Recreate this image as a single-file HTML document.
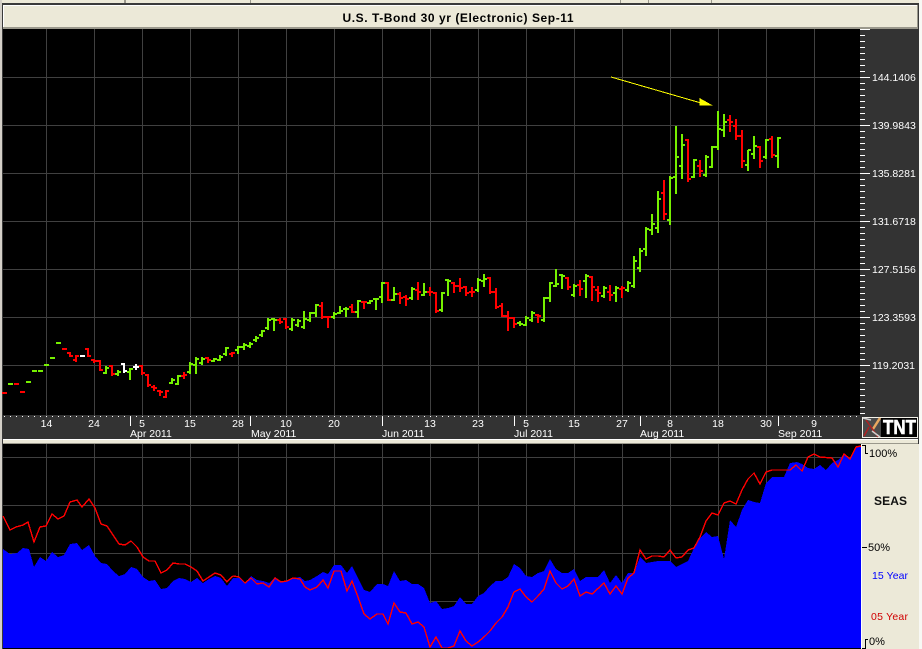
<!DOCTYPE html>
<html lang="en">
<head>
<meta charset="utf-8">
<title>U.S. T-Bond 30 yr (Electronic) Sep-11</title>
<style>
html,body{margin:0;padding:0;background:#ece9d8;width:922px;height:649px;overflow:hidden}
svg{display:block}
text{font-family:"Liberation Sans",Arial,sans-serif}
.c{shape-rendering:crispEdges}
</style>
</head>
<body>
<svg width="922" height="649" viewBox="0 0 922 649" xmlns="http://www.w3.org/2000/svg">
<defs>
<pattern id="gv" x="46" y="0" width="48" height="10" patternUnits="userSpaceOnUse"><rect class="c" width="1" height="10" fill="#404040"/></pattern>
<pattern id="gh" x="0" y="77" width="10" height="48" patternUnits="userSpaceOnUse"><rect class="c" width="10" height="1" fill="#404040"/></pattern>
<pattern id="gl" x="0" y="457" width="10" height="48" patternUnits="userSpaceOnUse"><rect class="c" width="10" height="1" fill="#404040"/></pattern>
</defs>

<rect class="c" width="922" height="649" fill="#ece9d8"/>
<rect class="c" x="919" y="0" width="3" height="649" fill="#f8f8f4"/>
<rect class="c" x="0" y="0" width="2" height="649" fill="#d4d0c8"/>
<path class="c" fill="#9a988c" d="M124 0h2v3h-2zM250 0h1v3h-1zM620 0h1v3h-1zM648 0h1v3h-1zM711 0h1v3h-1z"/>
<rect class="c" x="2" y="3" width="917" height="2" fill="#3a3a3a"/>
<rect class="c" x="2" y="3" width="1" height="646" fill="#3a3a3a"/>

<rect class="c" x="3" y="5" width="915" height="22" fill="#ece9d8"/>
<rect class="c" x="3" y="5" width="915" height="1" fill="#fff"/>
<rect class="c" x="3" y="5" width="1" height="22" fill="#fff"/>
<rect class="c" x="3" y="27" width="915" height="2" fill="#9a988c"/>
<rect class="c" x="917" y="5" width="1" height="24" fill="#9a988c"/>
<rect class="c" x="918" y="5" width="1" height="24" fill="#3a3a3a"/>
<text x="458" y="22" text-anchor="middle" font-size="12" font-weight="700" fill="#000" textLength="231" lengthAdjust="spacing">U.S. T-Bond 30 yr (Electronic) Sep-11</text>

<rect class="c" x="3" y="29" width="857" height="386" fill="#000"/>
<rect class="c" x="860" y="29" width="59" height="410" fill="#333"/>
<rect class="c" x="3" y="415" width="857" height="24" fill="#333"/>
<rect class="c" x="46" y="29" width="769" height="389" fill="url(#gv)"/>
<rect class="c" x="3" y="77" width="857" height="289" fill="url(#gh)"/>

<path class="c" fill="none" stroke="#ff0000" stroke-width="2" d="M2 393H7M14 384H19M20 392H25M62 349H67
M70 352V357M70 353H67M70 356H73
M76 355V362M76 360H73M76 356H79
M88 348V357M88 349H85M88 356H91
M94 359V363M94 360H91M94 361H97
M100 360V371M100 361H97M100 370H103
M112 365V376M112 366H109M112 374H115
M142 365V375M142 366H139M142 373H145
M148 374V387M148 375H145M148 385H151
M154 385V391M154 387H151M154 388H157
M160 390V396M160 391H157M160 392H163
M166 390V398M166 397H163M166 391H169
M184 372V379M184 376H181M184 375H187
M208 357V363M208 358H205M208 360H211
M232 352V357M232 354H229M232 353H235
M280 318V324M280 320H277M280 322H283
M286 318V329M286 319H283M286 327H289
M322 302V319M322 306H319M322 317H325
M328 316V328M328 317H325M328 317H331
M352 304V313M352 307H349M352 312H355
M364 301V309M364 302H361M364 302H367
M388 282V301M388 283H385M388 300H391
M400 292V304M400 294H397M400 298H403
M406 295V306M406 297H403M406 299H409
M418 282V300M418 290H415M418 292H421
M430 287V296M430 292H427M430 292H433
M436 292V313M436 293H433M436 311H439
M454 282V293M454 283H451M454 286H457
M460 278V292M460 286H457M460 288H463
M466 286V296M466 287H463M466 293H469
M472 287V297M472 292H469M472 292H475
M490 277V294M490 278H487M490 292H493
M496 288V309M496 292H493M496 307H499
M502 303V317M502 306H499M502 316H505
M508 311V331M508 316H505M508 318H511
M514 317V328M514 318H511M514 324H517
M538 314V323M538 315H535M538 316H541
M568 277V290M568 278H565M568 287H571
M580 280V296M580 285H577M580 289H583
M592 276V301M592 277H589M592 287H595
M598 286V302M598 290H595M598 293H601
M610 285V301M610 292H607M610 295H613
M622 286V298M622 289H619M622 288H625
M664 180V220M664 193H661M664 214H667
M688 139V182M688 140H685M688 179H691
M700 160V177M700 166H697M700 171H703
M730 115V132M730 120H727M730 122H733
M736 119V140M736 126H733M736 136H739
M742 130V168M742 136H739M742 161H745
M760 146V168M760 147H757M760 161H763
M772 136V158M772 139H769M772 155H775"/>

<path class="c" fill="none" stroke="#76f000" stroke-width="2" d="M8 384H13M26 382H31M32 371H37M38 371H43M44 365H49M50 358H55M56 343H61
M106 366V374M106 373H103M106 368H109
M118 370V376M118 374H115M118 372H121
M130 368V380M130 372H127M130 369H133
M172 378V384M172 383H169M172 380H175
M178 375V385M178 384H175M178 376H181
M190 362V374M190 372H187M190 364H193
M196 357V374M196 365H193M196 359H199
M202 357V365M202 363H199M202 359H205
M214 358V362M214 361H211M214 359H217
M220 355V361M220 360H217M220 357H223
M226 347V356M226 354H223M226 348H229
M238 346V354M238 350H235M238 347H241
M244 343V350M244 347H241M244 345H247
M250 342V348M250 346H247M250 344H253
M256 336V342M256 340H253M256 338H259
M262 330V337M262 335H259M262 331H265
M268 318V330M268 328H265M268 320H271
M274 318V331M274 319H271M274 320H277
M292 318V331M292 329H289M292 320H295
M298 319V327M298 325H295M298 321H301
M304 311V329M304 327H301M304 319H307
M310 312V322M310 320H307M310 313H313
M316 304V317M316 313H313M316 305H319
M334 312V319M334 317H331M334 314H337
M340 306V314M340 313H337M340 311H343
M346 307V317M346 309H343M346 309H349
M358 300V318M358 312H355M358 301H361
M370 300V304M370 303H367M370 301H373
M376 298V310M376 299H373M376 299H379
M382 282V303M382 297H379M382 283H385
M394 287V301M394 300H391M394 294H397
M412 287V300M412 298H409M412 289H415
M424 283V296M424 295H421M424 292H427
M442 292V312M442 310H439M442 293H445
M448 279V296M448 280H445M448 281H451
M478 278V292M478 290H475M478 280H481
M484 274V287M484 281H481M484 279H487
M520 321V326M520 323H517M520 324H523
M526 316V326M526 325H523M526 318H529
M532 311V322M532 320H529M532 313H535
M544 297V322M544 320H541M544 298H547
M550 282V302M550 298H547M550 283H553
M556 269V287M556 286H553M556 284H559
M562 274V289M562 275H559M562 276H565
M574 284V297M574 295H571M574 286H577
M586 274V298M586 281H583M586 276H589
M604 286V298M604 296H601M604 288H607
M616 286V302M616 293H613M616 288H619
M628 281V292M628 290H625M628 283H631
M634 256V288M634 286H631M634 261H637
M640 248V272M640 268H637M640 251H643
M646 227V256M646 249H643M646 229H649
M652 214V235M652 230H649M652 224H655
M658 191V233M658 228H655M658 199H661
M670 176V225M670 220H667M670 178H673
M676 126V194M676 177H673M676 157H679
M682 134V179M682 166H679M682 145H685
M694 159V178M694 177H691M694 160H697
M706 155V177M706 175H703M706 157H709
M712 146V168M712 167H709M712 147H715
M718 111V150M718 147H715M718 129H721
M724 114V137M724 130H721M724 122H727
M748 150V171M748 165H745M748 150H751
M754 136V159M754 154H751M754 146H757
M766 139V159M766 157H763M766 140H769
M778 137V168M778 156H775M778 138H781"/>

<path class="c" fill="none" stroke="#ffffff" stroke-width="2" d="M80 356H85M124 363V373M124 364H121M124 371H127M136 364V370M136 367H133M136 367H139"/>

<path class="c" fill="none" stroke="#ffff00" stroke-width="1" d="M611 77L701 103"/>
<path class="c" fill="#ffff00" d="M699.5 98L713 105.6H699.5Z"/>

<line class="c" x1="862.5" y1="35" x2="862.5" y2="414" stroke="#fff" stroke-width="5" stroke-dasharray="1 5"/>
<path class="c" fill="none" stroke="#fff" stroke-width="1" d="M860 29.5H870M860 77.5H870M860 125.5H870M860 173.5H870M860 221.5H870M860 269.5H870M860 317.5H870M860 365.5H870"/>
<g fill="#fff" font-size="10.5">
<text x="872" y="81">144.1406</text>
<text x="872" y="129">139.9843</text>
<text x="872" y="177">135.8281</text>
<text x="872" y="225">131.6718</text>
<text x="872" y="273">127.5156</text>
<text x="872" y="321">123.3593</text>
<text x="872" y="369">119.2031</text>
</g>

<line class="c" x1="4" y1="416.5" x2="860" y2="416.5" stroke="#fff" stroke-width="1" stroke-dasharray="1 5"/>
<path class="c" fill="none" stroke="#fff" stroke-width="1" d="M130.5 416V426M250.5 416V426M382.5 416V426M514.5 416V426M640.5 416V426M778.5 416V426"/>
<g fill="#fff" font-size="10.5" text-anchor="middle">
<text x="46.5" y="427">14</text><text x="94" y="427">24</text><text x="142" y="427">5</text><text x="190" y="427">15</text><text x="238" y="427">28</text><text x="286" y="427">10</text><text x="334" y="427">20</text><text x="430" y="427">13</text><text x="478" y="427">23</text><text x="526" y="427">5</text><text x="574" y="427">15</text><text x="622" y="427">27</text><text x="670" y="427">8</text><text x="718" y="427">18</text><text x="766" y="427">30</text><text x="814" y="427">9</text>
</g>
<g fill="#fff" font-size="10.5">
<text x="130" y="437">Apr 2011</text><text x="251" y="437">May 2011</text><text x="382" y="437">Jun 2011</text><text x="514" y="437">Jul 2011</text><text x="640" y="437">Aug 2011</text><text x="778" y="437">Sep 2011</text>
</g>

<rect class="c" x="862" y="417" width="56" height="21" fill="#f4f2ea"/>
<rect class="c" x="863" y="418" width="20" height="19" fill="#4a4a4a"/>
<rect class="c" x="881" y="418" width="36" height="19" fill="#000"/>
<path fill="none" stroke="#e8a860" stroke-width="2.5" d="M880 418L873 429"/>
<path fill="none" stroke="#b02020" stroke-width="1.5" d="M866 420L878 437M869 427L864 436"/>
<path fill="none" stroke="#cfcfcf" stroke-width="1.5" d="M863 418L871 420M872 431L880 437"/>
<text x="883" y="434" font-size="20" font-weight="700" fill="#fff" stroke="#fff" stroke-width=".6" textLength="33" lengthAdjust="spacingAndGlyphs">TNT</text>

<rect class="c" x="3" y="439" width="915" height="5" fill="#ece9d8"/>
<rect class="c" x="3" y="439" width="915" height="1" fill="#fff"/>
<rect class="c" x="3" y="443" width="915" height="1" fill="#9a988c"/>
<rect class="c" x="918" y="439" width="1" height="5" fill="#333"/>

<rect class="c" x="3" y="444" width="859" height="205" fill="#000"/>
<rect class="c" x="46" y="444" width="769" height="205" fill="url(#gv)"/>
<rect class="c" x="3" y="457" width="857" height="145" fill="url(#gl)"/>
<path class="c" fill="#0000ff" d="M3 549L10 554L17 553L23 548L29 549L34 567L40 557L46 561L52 552L58 557L64 555L70 544L77 543L82 550L89 545L95 556L101 563L107 564L113 571L119 576L125 574L131 567L137 569L143 577L149 581L155 580L161 589L167 588L173 581L179 578L185 579L191 582L197 578L203 583L209 579L215 576L221 578L227 586L233 578L239 578L245 583L251 576L257 580L263 581L269 583L275 577L281 582L287 580L293 578L300 577L305 581L310 580L317 576L323 572L328 574L334 565L341 565L347 573L352 566L358 578L364 590L370 592L377 584L383 584L388 586L394 571L400 581L406 580L412 584L418 584L424 588L430 603L436 601L442 609L448 608L454 606L460 597L466 604L472 604L478 596L484 593L490 586L496 581L502 581L508 577L514 564L520 568L526 576L532 577L538 573L544 571L550 559L556 569L562 573L568 573L574 569L580 581L586 577L598 577L604 570L610 583L616 575L622 583L628 573L634 573L640 557L646 563L652 562L658 561L670 561L676 567L688 561L694 548L700 538L706 532L712 537L718 536L724 559L730 520L736 527L742 510L748 500L754 502L760 503L766 483L772 477L784 477L790 463L797 462L802 464L808 468L814 469L820 465L826 470L832 463L838 460L844 454L850 458L856 447L861 446V648H3Z"/>
<path class="c" fill="none" stroke="#ff0000" stroke-width="1.4" d="M3 516L10 530L16 527L23 525L28 522L34 542L40 527L46 526L52 514L58 519L64 516L70 502L77 500L82 507L89 499L95 508L101 524L107 526L113 535L119 544L125 545L131 541L137 547L143 557L149 561L155 561L161 573L167 570L173 563L179 564L185 564L191 567L197 571L203 581L209 577L215 573L221 575L227 582L233 576L239 577L245 583L251 578L257 584L263 583L269 587L275 578L281 582L287 581L293 578L300 579L305 587L310 590L317 587L323 580L328 588L334 571L341 571L347 591L352 581L358 597L364 614L370 619L377 614L383 614L388 624L394 603L400 612L406 613L412 624L418 622L424 627L430 647L436 637L442 648L448 648L454 646L460 631L466 641L472 646L478 642L484 637L490 631L496 623L502 617L508 607L514 592L520 589L526 597L532 602L538 596L544 589L550 571L556 583L562 589L568 586L574 579L580 596L586 592L592 594L604 583L610 594L616 586L622 594L628 578L634 573L640 550L646 559L652 556L658 556L664 557L670 550L676 558L682 557L688 550L694 548L700 537L706 521L712 513L718 515L724 503L730 501L736 504L742 490L748 479L754 473L760 484L766 472L772 470L790 470L796 465L802 471L808 457L814 454L820 457L832 458L838 467L844 454L850 459L856 447L861 446"/>
<rect class="c" x="3" y="648" width="859" height="1" fill="#000"/>

<rect class="c" x="861" y="444" width="1" height="205" fill="#fff"/>
<rect class="c" x="862" y="444" width="56" height="205" fill="#ece9d8"/>
<path class="c" fill="none" stroke="#000" stroke-width="1" d="M862 445.5H865.5V453.5H868M862 547.5H867M862 648.5H865.5V639.5H868"/>
<g font-size="11" fill="#000">
<text x="869" y="457">100%</text>
<text x="868" y="551">50%</text>
<text x="869" y="645">0%</text>
</g>
<text x="874" y="505" font-size="12" font-weight="700" fill="#111" textLength="33" lengthAdjust="spacing">SEAS</text>
<text x="872" y="579" font-size="10.5" fill="#0000ff" textLength="36" lengthAdjust="spacing">15 Year</text>
<text x="871" y="620" font-size="10.5" fill="#d00000" textLength="37" lengthAdjust="spacing">05 Year</text>
</svg>
</body>
</html>
